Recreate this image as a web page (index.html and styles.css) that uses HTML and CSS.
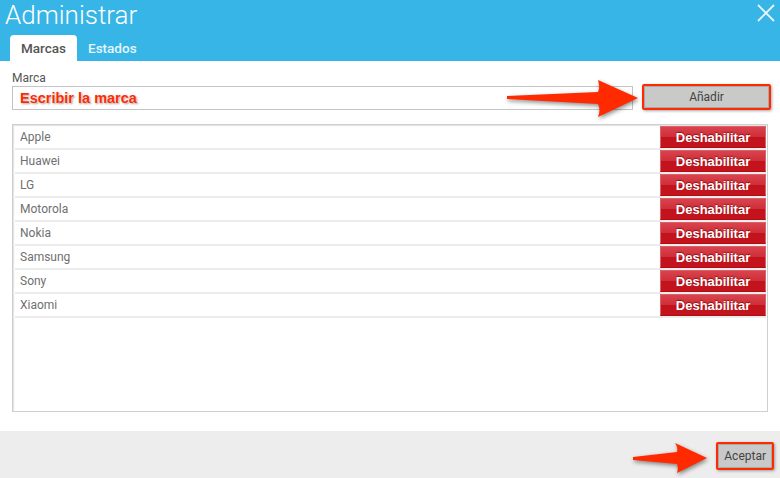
FILE: index.html
```html
<!DOCTYPE html>
<html lang="es">
<head>
    <meta charset="utf-8">
    <title>Administrar</title>
    <link rel="stylesheet" href="styles.css">
</head>
<body>
<div class="header">
    <div class="title-row">
        <h1>Administrar</h1>
        <svg class="close" width="20" height="20" viewBox="0 0 20 20">
            <path d="M2 2 L18 18 M18 2 L2 18" stroke="#e8f7fd" stroke-width="1.8" fill="none"/>
        </svg>
    </div>
    <div class="tabs">
        <span class="tab active">Marcas</span>
        <span class="tab">Estados</span>
    </div>
</div>

<div class="content">
    <div class="label">Marca</div>
    <div class="form-row">
        <div class="input"><span class="hint">Escribir la marca</span></div>
        <div class="mark"><button class="grey-btn wide">Añadir</button></div>
    </div>

    <div class="list">
        <div class="row"><span>Apple</span><button class="red-btn">Deshabilitar</button></div>
        <div class="row"><span>Huawei</span><button class="red-btn">Deshabilitar</button></div>
        <div class="row"><span>LG</span><button class="red-btn">Deshabilitar</button></div>
        <div class="row"><span>Motorola</span><button class="red-btn">Deshabilitar</button></div>
        <div class="row"><span>Nokia</span><button class="red-btn">Deshabilitar</button></div>
        <div class="row"><span>Samsung</span><button class="red-btn">Deshabilitar</button></div>
        <div class="row"><span>Sony</span><button class="red-btn">Deshabilitar</button></div>
        <div class="row"><span>Xiaomi</span><button class="red-btn">Deshabilitar</button></div>
    </div>
</div>

<div class="footer">
    <div class="mark"><button class="grey-btn">Aceptar</button></div>
</div>

<!-- annotation arrows -->
<svg class="arrows" width="780" height="478" viewBox="0 0 780 478">
    <path d="M507 96 L598 92 C600 88 599 84 598 80 L638 98 L598 117 C600 112 600 108 598 104 L507 99 Z" fill="#ff2a00"/>
    <path d="M633 457 L677 452 C678 449 677 446 675 443 L707 458 L677 473 C678 470 678 467 677 464 L633 460 Z" fill="#ff2a00"/>
</svg>
</body>
</html>
```

FILE: styles.css
```css
* {
    box-sizing: border-box;
}
body {
    margin: 0;
    width: 780px;
    height: 478px;
    overflow: hidden;
    position: relative;
    background: white;
    font-family: Roboto, "Liberation Sans", sans-serif;
}
.header {
    background-color: #36b5e6;
    height: 61px;
    display: flex;
    flex-direction: column;
    justify-content: space-between;
}
.title-row {
    display: flex;
    justify-content: space-between;
    padding: 0 4px 0 5px;
}
h1 {
    margin: 0;
    font-size: 26px;
    font-weight: 300;
    line-height: 30px;
    color: white;
}
.close {
    margin-top: 3px;
}
.tabs {
    display: flex;
    padding-left: 10px;
    height: 26px;
}
.tab {
    padding: 0 11px;
    font-size: 13.5px;
    font-weight: 500;
    line-height: 27px;
    color: #e6f6fc;
}
.tab.active {
    background: white;
    color: #555;
    border-radius: 4px 4px 0 0;
}
.content {
    padding: 11px 12px 0 12px;
}
.label {
    font-size: 12px;
    line-height: 12px;
    color: #555;
}
.form-row {
    display: flex;
    align-items: flex-end;
    height: 26px;
}
.input {
    flex-shrink: 0;
    width: 621px;
    height: 24px;
    border: 1px solid #c4c4c4;
    padding-left: 7px;
    line-height: 21px;
}
.hint {
    font-family: "Liberation Sans", Arial, sans-serif;
    font-weight: bold;
    font-size: 14.5px;
    color: #ff2a00;
    text-shadow: 0 0 2px white, 1px 1px 2px rgba(0, 0, 0, 0.45);
}
.mark {
    flex-shrink: 0;
    border: 2px solid #ff2a00;
    box-shadow: 1px 1px 3px rgba(0, 0, 0, 0.35);
    border-radius: 2px;
}
.form-row .mark {
    margin-left: 9px;
    align-self: flex-start;
}
.grey-btn {
    display: block;
    border: 1px solid #a9a9a9;
    background: #c9c9c9;
    color: #444;
    font-family: Roboto, "Liberation Sans", sans-serif;
    font-size: 12px;
    height: 22px;
    padding: 0 6px;
}
.grey-btn.wide {
    width: 125px;
}
.list {
    margin-top: 14px;
    width: 756px;
    height: 288px;
    border: 1px solid #cfcfcf;
    box-shadow: inset 1px 1px 1px #e2e2e2;
    padding: 1px 1px 0 2px;
}
.row {
    display: flex;
    justify-content: space-between;
    align-items: flex-start;
    height: 24px;
    border-bottom: 2px solid #ececec;
    padding-left: 5px;
    font-size: 12px;
    color: #707070;
    line-height: 23px;
}
.red-btn {
    width: 106px;
    height: 22px;
    border: 1px solid #e0606a;
    border-bottom-color: #b00d16;
    background: linear-gradient(#d8434d 0%, #cf2f39 48%, #c2121c 52%, #c3141e 100%);
    color: white;
    font-family: "Liberation Sans", Arial, sans-serif;
    font-weight: bold;
    font-size: 13px;
    line-height: normal;
    text-shadow: 0 -1px 1px rgba(90, 0, 0, 0.6);
    padding: 0;
}
.footer {
    margin-top: 19px;
    height: 47px;
    background: #ededed;
    display: flex;
    justify-content: flex-end;
    padding: 11px 6px 0 0;
}
.footer .mark {
    height: 28px;
}
.footer .grey-btn {
    height: 24px;
    padding: 0 5px;
}
.arrows {
    position: absolute;
    left: 0;
    top: 0;
    pointer-events: none;
    filter: drop-shadow(1px 2px 2px rgba(0, 0, 0, 0.45));
}
```
